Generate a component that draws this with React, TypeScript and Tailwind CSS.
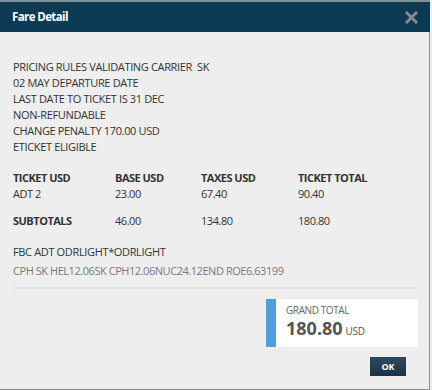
import React from "react";

const font = { fontFamily: '"Open Sans", "Noto Sans", Arial, sans-serif' };

export default function App() {
  const lines = [
    "PRICING RULES VALIDATING CARRIER\u00a0 SK",
    "02 MAY DEPARTURE DATE",
    "LAST DATE TO TICKET IS 31 DEC",
    "NON-REFUNDABLE",
    "CHANGE PENALTY 170.00 USD",
    "ETICKET ELIGIBLE",
  ];
  return (
    <div className="w-[432px] h-[390px] bg-[#ededed] overflow-hidden" style={font}>
      <div className="w-[430px] h-[390px] border-t-2 border-[#8f8f8f] flex flex-col">
        <div className="h-[30px] bg-[#0b3a55] flex items-center justify-between pl-3 pr-3 shrink-0">
          <span className="text-white font-bold text-[11.5px] tracking-[-0.6px] leading-none">Fare Detail</span>
          <svg width="13" height="13" viewBox="0 0 13 13" className="mt-[1px]">
            <path d="M2 2 L11 11 M11 2 L2 11" stroke="#8a8a8a" strokeWidth="3" strokeLinecap="square" />
          </svg>
        </div>
        <div className="flex-1 bg-[#eeeeee] border-r border-b border-[#8f8f8f] pl-[13px] pr-[11px] pt-[27px] text-[#333] text-[11px] tracking-[-0.35px]">
          <div className="leading-[16px]">
            {lines.map((l) => (
              <div key={l}>{l}</div>
            ))}
          </div>
          <div className="mt-[15px] leading-[16px]">
            <div className="grid grid-cols-[102px_86px_97px_1fr] font-bold tracking-[-0.5px]">
              <div>TICKET USD</div>
              <div>BASE USD</div>
              <div>TAXES USD</div>
              <div>TICKET TOTAL</div>
            </div>
            <div className="grid grid-cols-[102px_86px_97px_1fr] tracking-[-0.45px]">
              <div>ADT 2</div>
              <div>23.00</div>
              <div>67.40</div>
              <div>90.40</div>
            </div>
            <div className="grid grid-cols-[102px_86px_97px_1fr] mt-[11px] tracking-[-0.45px]">
              <div className="font-bold tracking-[-0.5px]">SUBTOTALS</div>
              <div>46.00</div>
              <div>134.80</div>
              <div>180.80</div>
            </div>
          </div>
          <div className="mt-[15px] leading-[16px]">FBC ADT ODRLIGHT*ODRLIGHT</div>
          <div className="mt-[3px] leading-[16px] text-[#7a7a7a] tracking-[-0.45px]">CPH SK HEL12.06SK CPH12.06NUC24.12END ROE6.63199</div>
          <div className="mt-[8px] h-[2px] bg-[#e2e2e2]" />
          <div className="flex justify-end mt-[10px] tracking-normal">
            <div className="w-[152px] h-[48px] bg-white flex">
              <div className="w-[10px] bg-[#4e9fdb]" />
              <div className="pl-[10px] pt-[5px]">
                <div className="text-[10px] leading-[12px] text-[#666] tracking-[-0.4px]">GRAND TOTAL</div>
                <div className="flex items-baseline gap-[3px] text-[#555]">
                  <span className="text-[18px] font-bold leading-[24px]">180.80</span>
                  <span className="text-[10px] tracking-[-0.3px]">USD</span>
                </div>
              </div>
            </div>
          </div>
          <div className="flex justify-end mt-[10px] pr-[12px]">
            <button className="w-[36px] h-[19px] bg-gradient-to-b from-[#2c4a62] to-[#1a3246] text-white text-[9px] font-bold flex items-center justify-center tracking-normal">
              OK
            </button>
          </div>
        </div>
      </div>
    </div>
  );
}
